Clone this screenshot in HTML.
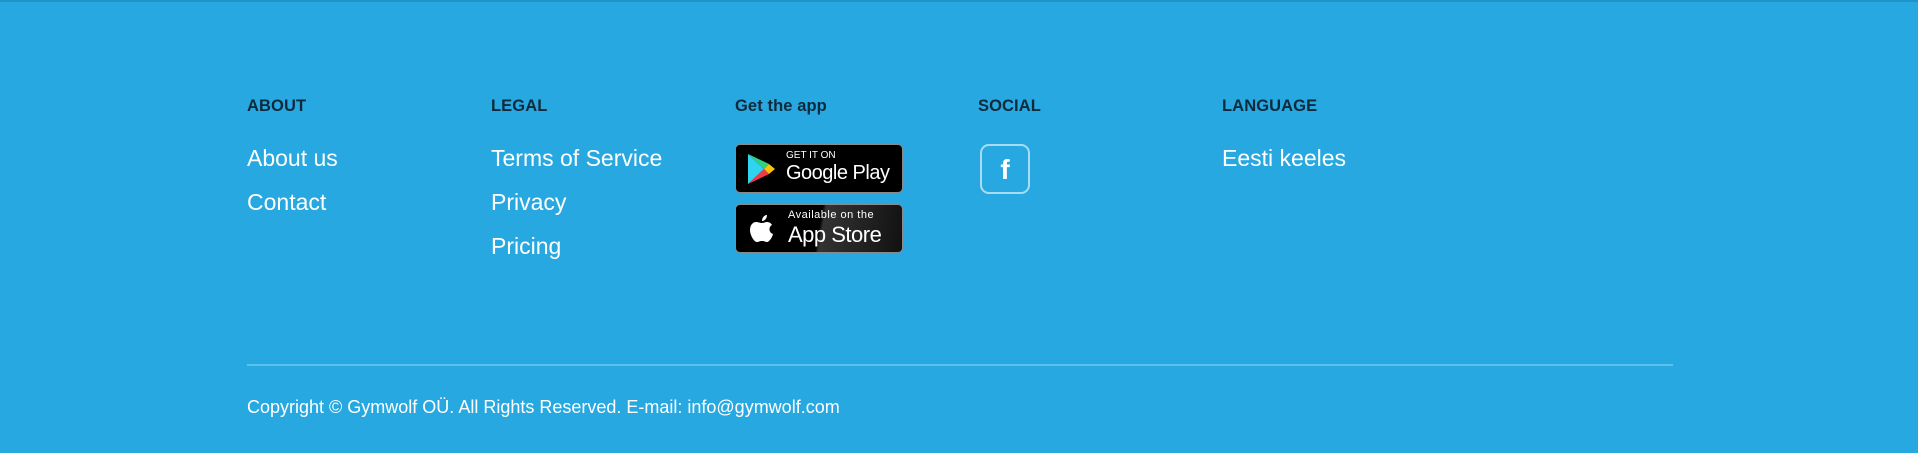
<!DOCTYPE html>
<html><head><meta charset="utf-8"><style>
*{margin:0;padding:0;box-sizing:border-box}
body{width:1918px;height:453px;background:#27a8e0;font-family:"Liberation Sans",sans-serif;position:relative;overflow:hidden;border-top:2px solid #1f94c8}
.h{position:absolute;top:95px;font-size:16.5px;font-weight:bold;color:#0f2a3c;letter-spacing:0.1px}
.l{position:absolute;font-size:23px;color:#fff}
.badge{position:absolute;left:735px;width:168px;height:49px;background:#000;border:1px solid #8a8a8a;border-radius:5px;color:#fff}
.fb{position:absolute;left:980px;top:142px;width:50px;height:50px;border:2px solid #a8dcf3;border-radius:9px;color:#fff;font-weight:bold;font-size:28px;text-align:center;line-height:48px}
.line{position:absolute;left:247px;top:362px;width:1426px;height:2px;background:#5cc0ec}
.c{position:absolute;left:247px;top:395px;font-size:18px;color:#fff}
</style></head><body>
<div class="h" style="left:247px">ABOUT</div>
<div class="h" style="left:491px">LEGAL</div>
<div class="h" style="left:735px">Get the app</div>
<div class="h" style="left:978px">SOCIAL</div>
<div class="h" style="left:1222px">LANGUAGE</div>
<div class="l" style="left:247px;top:143px">About us</div>
<div class="l" style="left:247px;top:187px">Contact</div>
<div class="l" style="left:491px;top:143px">Terms of Service</div>
<div class="l" style="left:491px;top:187px">Privacy</div>
<div class="l" style="left:491px;top:231px">Pricing</div>
<div class="l" style="left:1222px;top:143px">Eesti keeles</div>
<div class="badge" style="top:142px">
<svg style="position:absolute;left:10px;top:8px" width="30" height="32" viewBox="0 0 30 32"><path d="M2 1 L18 16 L2 31Z" fill="#2fd4f0"/><path d="M2 1 L18 16 L23 11 Z" fill="#35d07f"/><path d="M2 31 L18 16 L23 21Z" fill="#f0394a"/><path d="M18 16 L23 11 L29 16 L23 21Z" fill="#ffc107"/></svg>
<div style="position:absolute;left:50px;top:5px;font-size:10px">GET IT ON</div>
<div style="position:absolute;left:50px;top:17px;font-size:20px;letter-spacing:-0.5px">Google Play</div>
</div>
<div class="badge" style="top:202px;background:linear-gradient(100deg,#000 50%,#333 52%,#111)">
<svg style="position:absolute;left:13px;top:8px" width="26" height="32" viewBox="0 0 26 32"><path d="M18 2c0 3-2 6-5 6 0-3 2-6 5-6z M13 10c2 0 3-1 5-1 2 0 4 1 5 3-4 2-3 8 1 9-1 4-4 8-6 8-2 0-2-1-5-1s-3 1-5 1C5 29 1 22 1 17c0-5 3-8 6-8 2 0 4 1 6 1z" fill="#fff"/></svg>
<div style="position:absolute;left:52px;top:4px;font-size:11px;letter-spacing:0.5px">Available on the</div>
<div style="position:absolute;left:52px;top:17px;font-size:22px;letter-spacing:-0.5px">App Store</div>
</div>
<div class="fb">f</div>
<div class="line"></div>
<div class="c">Copyright © Gymwolf OÜ. All Rights Reserved. E-mail: info@gymwolf.com</div>
</body></html>
